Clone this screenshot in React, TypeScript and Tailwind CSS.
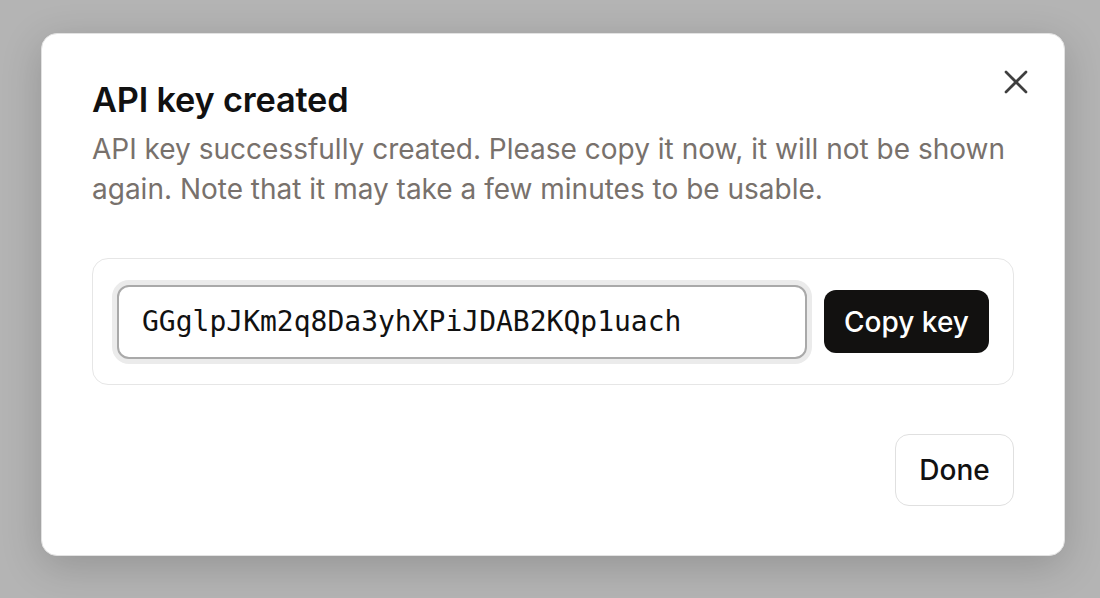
import { X } from "lucide-react";

export default function App() {
  return (
    <div className="h-[598px] w-[1100px] overflow-hidden bg-[#b4b4b4] pl-[41px] pt-[33px] font-['Inter',sans-serif]">
      <div className="relative w-[1024px] rounded-[16px] border border-[#e2e2e2] bg-white px-[50px] pb-[49px] pt-[45px] shadow-[0_10px_40px_rgba(0,0,0,0.18)]">
        <button
          type="button"
          aria-label="Close"
          className="absolute right-[28px] top-[28px] flex h-[40px] w-[40px] items-center justify-center text-[#3f3f3f]"
        >
          <X size={40} strokeWidth={1.6} />
        </button>

        <h2 className="text-[34.3px] font-semibold leading-[42px] tracking-[-0.005em] text-[#111111]">API key created</h2>
        <p className="mt-[8px] text-[28px] leading-[40px] text-[#78716c]">
          API key successfully created. Please copy it now, it will not be shown again. Note that it may take a few
          minutes to be usable.
        </p>

        <div className="mt-[49px] flex h-[127px] items-center gap-[17px] rounded-[16px] border border-[#e6e6e6] px-[24px]">
          <input
            readOnly
            value="GGglpJKm2q8Da3yhXPiJDAB2KQp1uach"
            className="h-[74px] min-w-0 flex-1 rounded-[12px] border-2 border-[#a9a9a9] bg-white pl-[23px] font-['DejaVu_Sans_Mono',monospace] text-[28px] text-[#111111] shadow-[0_0_0_5px_#ebebeb] outline-none"
          />
          <button
            type="button"
            className="flex h-[63px] w-[165px] shrink-0 items-center justify-center rounded-[12px] bg-[#121110] text-[28px] font-medium text-white"
          >
            Copy key
          </button>
        </div>

        <div className="mt-[49px] flex justify-end">
          <button
            type="button"
            className="flex h-[72px] w-[119px] items-center justify-center rounded-[14px] border border-[#e0e0e0] bg-white text-[28px] font-medium text-[#111111]"
          >
            Done
          </button>
        </div>
      </div>
    </div>
  );
}
